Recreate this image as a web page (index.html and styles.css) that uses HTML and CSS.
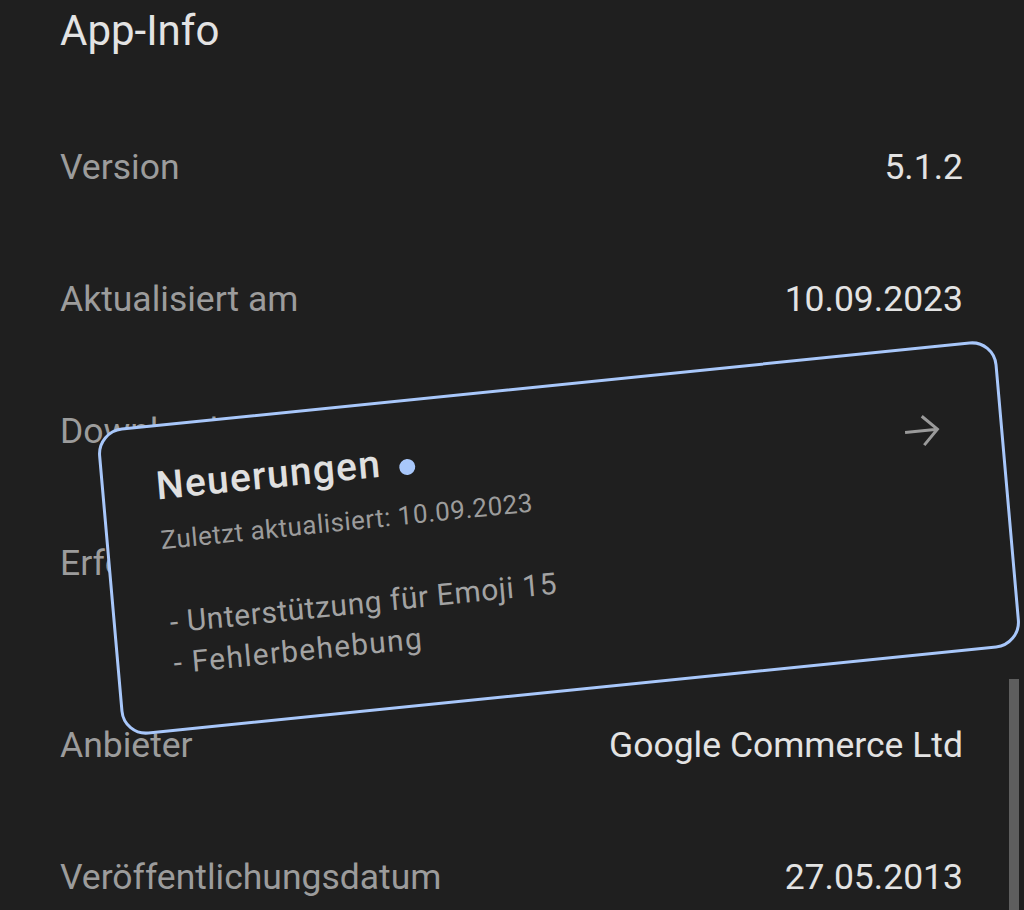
FILE: index.html
```html
<!DOCTYPE html>
<html lang="de">
<head>
<meta charset="utf-8">
<title>App-Info</title>
<link rel="stylesheet" href="styles.css">
</head>
<body>
<main class="page">
  <h1 class="title">App-Info</h1>
  <div class="row"><span class="label">Version</span><span class="value">5.1.2</span></div>
  <div class="row"><span class="label">Aktualisiert am</span><span class="value">10.09.2023</span></div>
  <div class="row"><span class="label">Downloads</span><span class="value">1 Mrd.+</span></div>
  <div class="row"><span class="label">Erforderliche Android-Version</span><span class="value">Android 6.0 und<br>höher</span></div>
  <div class="row"><span class="label">Anbieter</span><span class="value">Google Commerce Ltd</span></div>
  <div class="row"><span class="label">Veröffentlichungsdatum</span><span class="value">27.05.2013</span></div>
</main>

<div class="scrollbar"></div>

<section class="card">
  <div class="card-head">
    <h2 class="card-title">Neuerungen<span class="dot"></span></h2>
    <p class="card-sub">Zuletzt aktualisiert: 10.09.2023</p>
    <svg class="arrow" width="36" height="36" viewBox="0 0 36 36" aria-hidden="true">
      <path d="M1 18H33.5M19 3.5L33.5 18L19 32.5" fill="none" stroke="currentColor" stroke-width="3"/>
    </svg>
  </div>
  <ul class="notes">
    <li>- Unterstützung für Emoji 15</li>
    <li class="wide">- Fehlerbehebung</li>
  </ul>
</section>
</body>
</html>
```

FILE: styles.css
```css
* { box-sizing: border-box; }

html, body {
  margin: 0;
  padding: 0;
}

body {
  width: 1024px;
  height: 910px;
  overflow: hidden;
  background: #1f1f1f;
  font-family: Roboto, "Noto Sans", "Liberation Sans", sans-serif;
  position: relative;
}

.page {
  padding: 6px 61px 0 60px;
}

.title {
  margin: 0 0 45px 0;
  font-size: 42px;
  line-height: 50px;
  font-weight: 400;
  color: #e3e3e3;
}

.row {
  display: flex;
  justify-content: space-between;
  align-items: flex-start;
  padding: 41px 0;
  font-size: 35.5px;
  line-height: 50px;
}

.label {
  color: #9c9c9c;
  white-space: nowrap;
}

.value {
  color: #e3e3e3;
  text-align: right;
}

.scrollbar {
  position: absolute;
  left: 1009px;
  top: 679px;
  width: 10px;
  height: 240px;
  background: #5e5e5e;
}

.card {
  position: absolute;
  left: 107px;
  top: 384px;
  width: 904px;
  height: 308px;
  border: 3px solid #a8c7fa;
  border-radius: 26px;
  background: #1f1f1f;
  padding: 36px 40px 0 52px;
  transform: rotate(-5.8deg) skewX(-0.8deg);
  transform-origin: 50% 50%;
}

.card-head {
  display: grid;
  grid-template-columns: 1fr auto;
  grid-template-rows: auto auto;
  column-gap: 16px;
}

.card-title {
  grid-column: 1;
  grid-row: 1;
  margin: 0;
  display: flex;
  align-items: center;
  font-size: 39px;
  line-height: 46px;
  font-weight: 500;
  letter-spacing: 1.3px;
  color: #e0e0e0;
}

.dot {
  display: inline-block;
  width: 16px;
  height: 16px;
  border-radius: 50%;
  background: #a8c7fa;
  margin-left: 18px;
  margin-top: 12px;
}

.card-sub {
  grid-column: 1;
  grid-row: 2;
  margin: 15px 0 0 0;
  font-size: 26px;
  line-height: 32px;
  letter-spacing: 0.5px;
  color: #9c9c9c;
}

.arrow {
  grid-column: 2;
  grid-row: 1 / span 2;
  align-self: start;
  margin-top: 27px;
  margin-right: 20px;
  color: #9a9a9a;
  display: block;
}

.notes {
  list-style: none;
  margin: 46px 0 0 0;
  padding: 0 0 0 2px;
  font-size: 30px;
  line-height: 41px;
  letter-spacing: 0.6px;
  color: #a3a3a3;
}

.notes li {
  margin: 0;
}

.notes .wide {
  letter-spacing: 1.3px;
}
```
